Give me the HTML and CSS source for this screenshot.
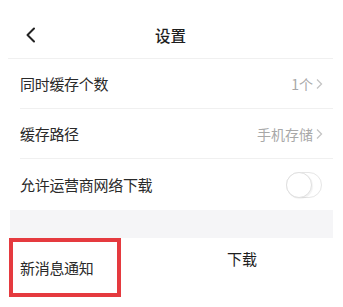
FILE: index.html
```html
<!DOCTYPE html>
<html lang="zh-CN">
<head>
<meta charset="utf-8">
<link rel="stylesheet" href="styles.css">
</head>
<body>
<div class="page">
  <header class="header">
    <span class="back">
      <svg width="12" height="16" viewBox="0 0 12 16"><polyline points="9,1.5 2.5,8 9,14.5" fill="none" stroke="#222" stroke-width="2" stroke-linecap="round" stroke-linejoin="round"/></svg>
    </span>
    <h1 class="title">设置</h1>
  </header>
  <div class="list">
    <div class="row">
      <span class="label">同时缓存个数</span>
      <span class="value">1个<svg class="chev" width="8" height="12" viewBox="0 0 8 12"><polyline points="2,1.5 6.5,6 2,10.5" fill="none" stroke="#c4c4c4" stroke-width="1.3"/></svg></span>
    </div>
    <div class="row">
      <span class="label">缓存路径</span>
      <span class="value">手机存储<svg class="chev" width="8" height="12" viewBox="0 0 8 12"><polyline points="2,1.5 6.5,6 2,10.5" fill="none" stroke="#c4c4c4" stroke-width="1.3"/></svg></span>
    </div>
    <div class="row last">
      <span class="label">允许运营商网络下载</span>
      <span class="switch"><span class="knob"></span></span>
    </div>
  </div>
  <div class="gap"></div>
  <div class="bottom">
    <div class="marked"><span class="label">新消息通知</span></div>
    <span class="stray">下载</span>
  </div>
</div>
</body>
</html>
```

FILE: styles.css
```css
* { box-sizing: border-box; }
html, body { margin: 0; padding: 0; background: #fff; }
body {
  font-family: "Noto Sans CJK SC", "Noto Sans", sans-serif;
  color: #2a2a2a;
  width: 343px;
  height: 307px;
  overflow: hidden;
}
.page { width: 343px; }
.header {
  height: 59px;
  margin: 0 10px 0 8px;
  padding-top: 12px;
  border-bottom: 1px solid #f0f0f0;
  display: flex;
  align-items: center;
  position: relative;
}
.header .back {
  display: flex;
  margin-left: 17px;
  margin-top: -1px;
}
.title {
  position: absolute;
  left: 0; right: 0;
  top: 12px; bottom: 0;
  margin: 0;
  display: flex;
  align-items: center;
  justify-content: center;
  font-size: 15.5px;
  font-weight: 500;
  color: #1e1e1e;
  pointer-events: none;
}
.list { margin: 0 10px 0 20px; }
.row {
  height: 50px;
  display: flex;
  align-items: center;
  justify-content: space-between;
  border-bottom: 1px solid #f0f0f0;
}
.row.last { border-bottom: none; height: 51px; }
.label { font-size: 15px; color: #2a2a2a; letter-spacing: -0.3px; }
.value {
  display: flex;
  align-items: center;
  font-size: 14px;
  color: #a8a8a8;
  padding-right: 10px;
  gap: 2px;
}
.chev { display: block; }
.switch {
  width: 36px;
  height: 26px;
  border: 1px solid #e6e6e6;
  border-radius: 13px;
  margin-right: 11px;
  position: relative;
  background: #fff;
}
.knob {
  position: absolute;
  left: -1px; top: -1px;
  width: 26px; height: 26px;
  border-radius: 50%;
  background: #fff;
  border: 1px solid #e0e0e0;
  box-shadow: 1px 1px 1px rgba(0,0,0,0.05);
}
.gap {
  height: 28px;
  margin: 0 10px;
  background: #f5f5f7;
}
.bottom {
  display: flex;
  align-items: flex-start;
}
.marked {
  width: 112px;
  height: 59px;
  margin-left: 9px;
  border: 4px solid #e53a3f;
  display: flex;
  align-items: center;
  padding-left: 7px;
}
.stray {
  font-size: 15px;
  color: #1e1e1e;
  margin-left: 106px;
  margin-top: 10px;
}
```
